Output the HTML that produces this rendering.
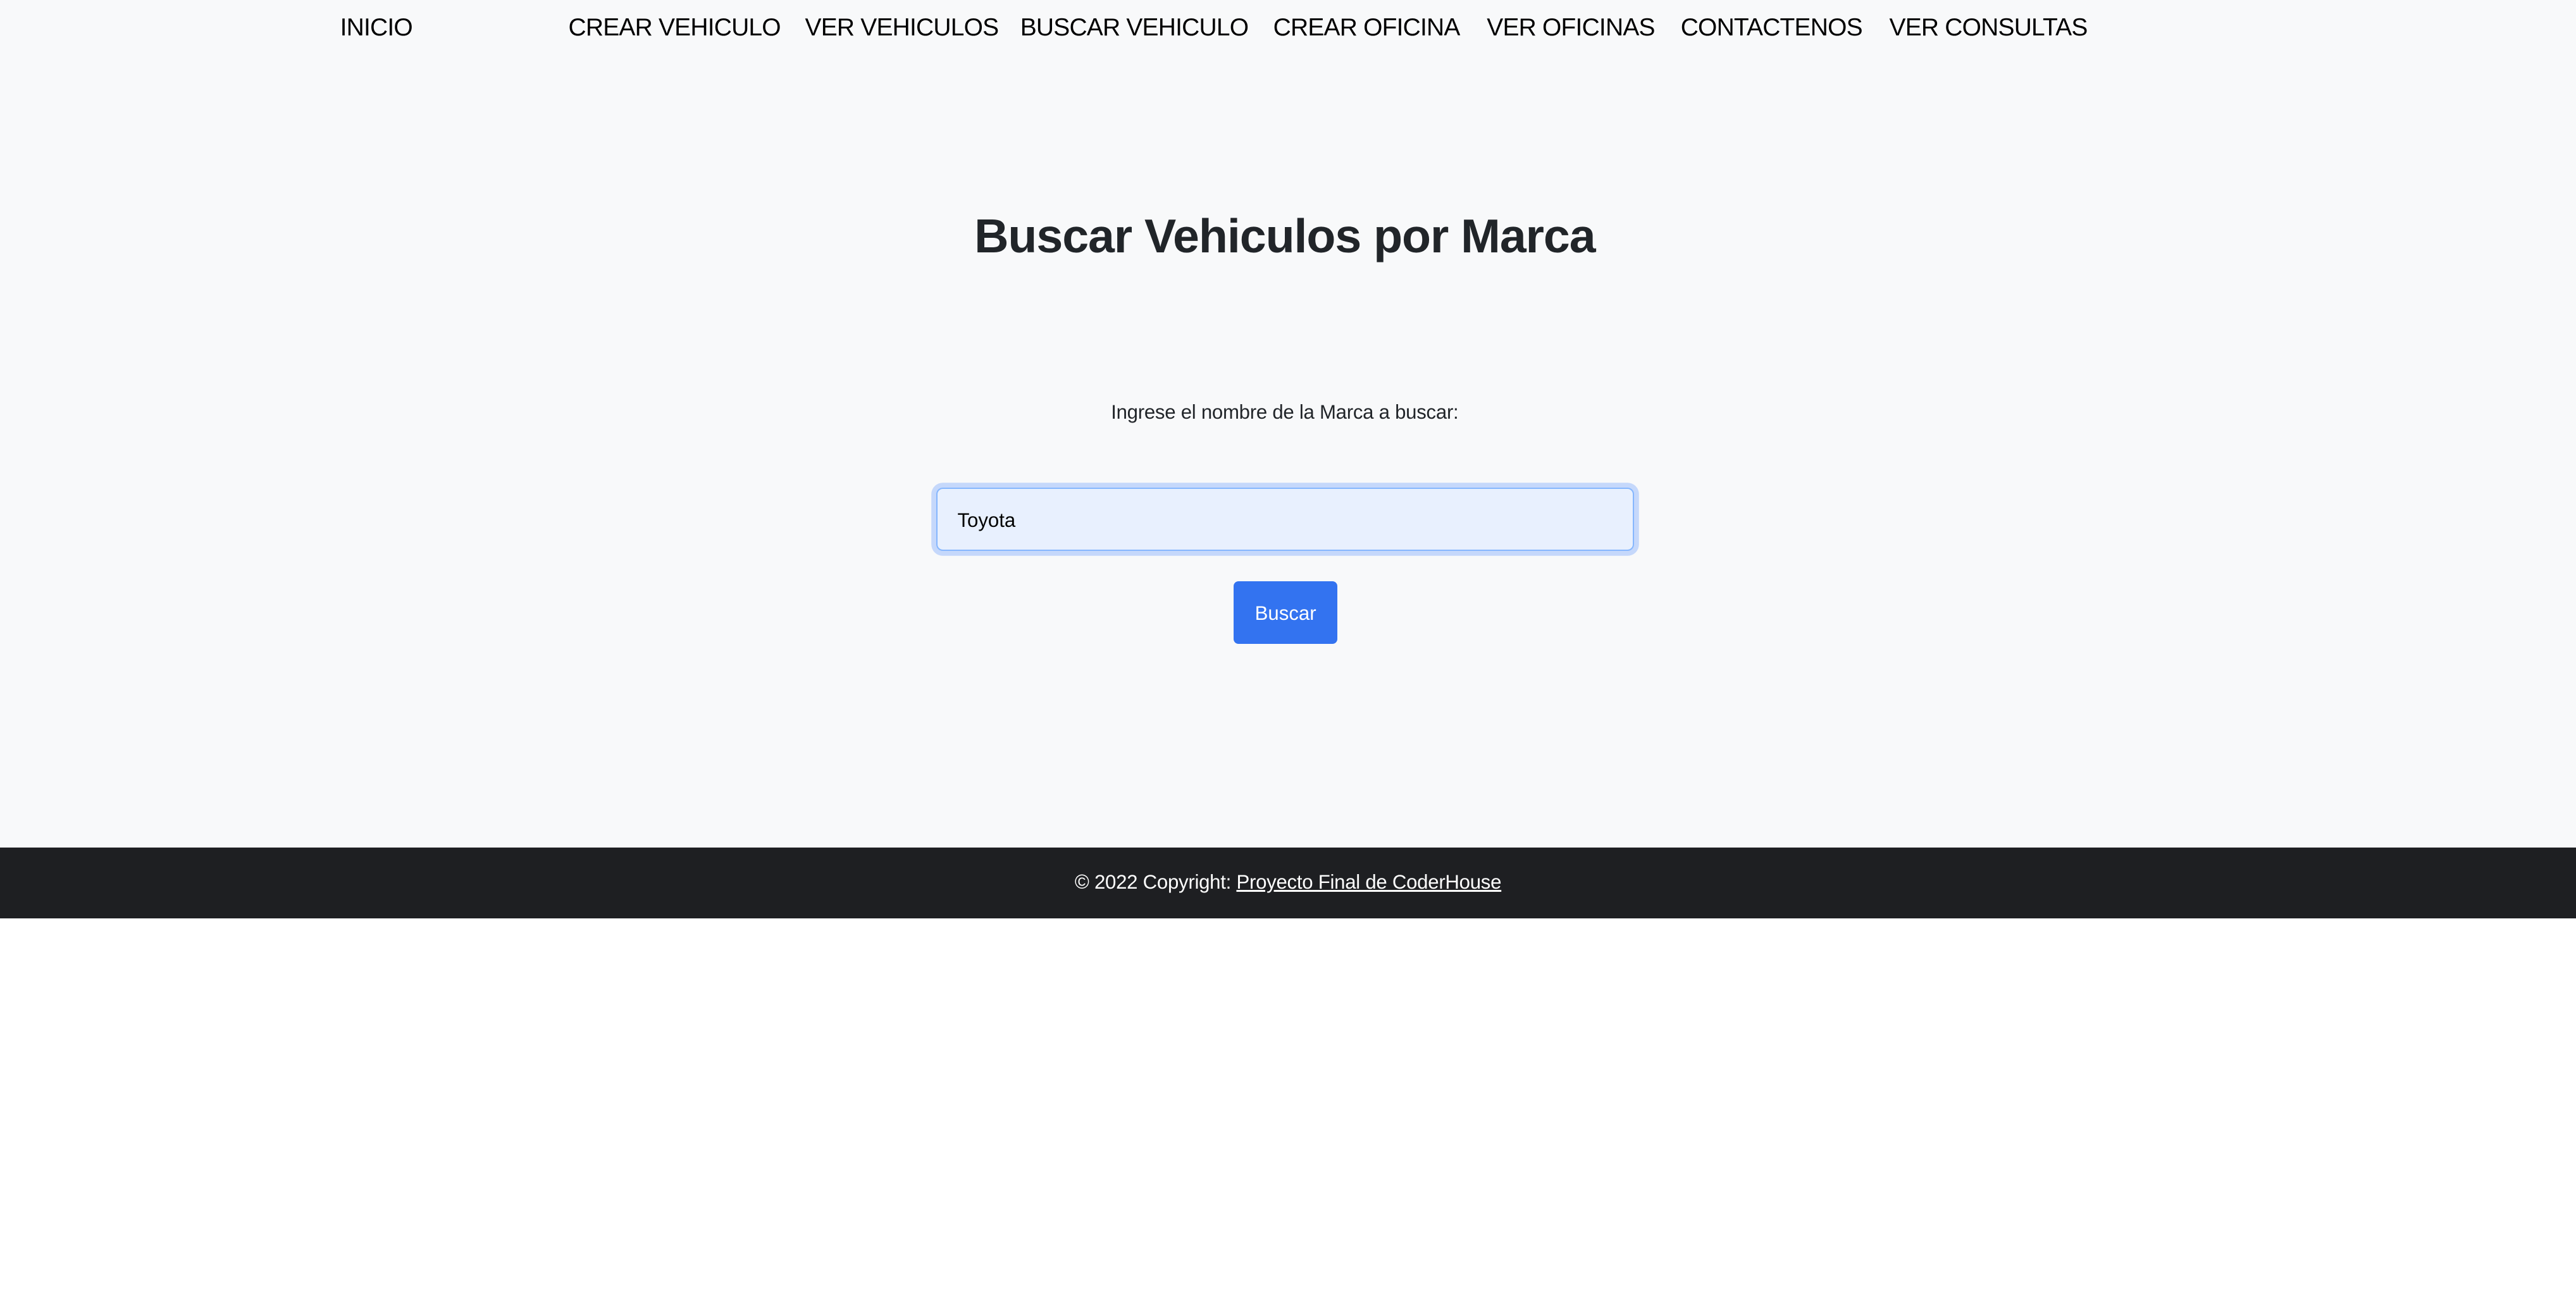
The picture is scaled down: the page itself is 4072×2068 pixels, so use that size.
<!DOCTYPE html>
<html><head><meta charset="utf-8">
<style>
html{zoom:2.597;}
body{margin:0;width:1568px;height:796px;background:#fff;font-family:"Liberation Sans",sans-serif;position:relative;overflow:hidden;}
.main{position:absolute;left:0;top:0;width:1568px;height:516px;background:#f8f9fa;}
.nav a{position:absolute;top:8px;font-size:15px;color:#000;text-decoration:none;white-space:nowrap;line-height:18px;letter-spacing:-0.3px;}
h1{position:absolute;top:124px;left:0;width:1564px;text-align:center;margin:0;font-size:29px;font-weight:bold;color:#212529;line-height:40px;letter-spacing:-0.4px;}
.lbl{position:absolute;top:243px;left:0;width:1564px;text-align:center;font-size:12px;color:#212529;line-height:16px;letter-spacing:-0.1px;}
.inp{position:absolute;left:570px;top:297px;width:423px;height:37px;background:#e8f0fe;border:1px solid #86b7fe;border-radius:4px;box-shadow:0 0 0 3px #c5d8fb;}
.inp span{position:absolute;left:12px;top:11px;font-size:12px;color:#000;line-height:16px;}
.btn{position:absolute;left:751px;top:354px;width:63px;height:38px;background:#3373f0;border-radius:3px;color:#fff;font-size:12px;text-align:center;line-height:39px;}
.foot{position:absolute;left:0;top:516px;width:1568px;height:43px;background:#1e1f22;color:#fff;font-size:12px;text-align:center;line-height:42px;letter-spacing:-0.1px;}
.foot u{color:#fff;}
</style></head>
<body>
<div class="main">
<div class="nav">
<a style="left:207px">INICIO</a>
<a style="left:346px">CREAR VEHICULO</a>
<a style="left:490px">VER VEHICULOS</a>
<a style="left:621px">BUSCAR VEHICULO</a>
<a style="left:775px">CREAR OFICINA</a>
<a style="left:905px">VER OFICINAS</a>
<a style="left:1023px">CONTACTENOS</a>
<a style="left:1150px">VER CONSULTAS</a>
</div>
<h1>Buscar Vehiculos por Marca</h1>
<div class="lbl">Ingrese el nombre de la Marca a buscar:</div>
<div class="inp"><span>Toyota</span></div>
<div class="btn">Buscar</div>
</div>
<div class="foot">© 2022 Copyright: <u>Proyecto Final de CoderHouse</u></div>
</body></html>
